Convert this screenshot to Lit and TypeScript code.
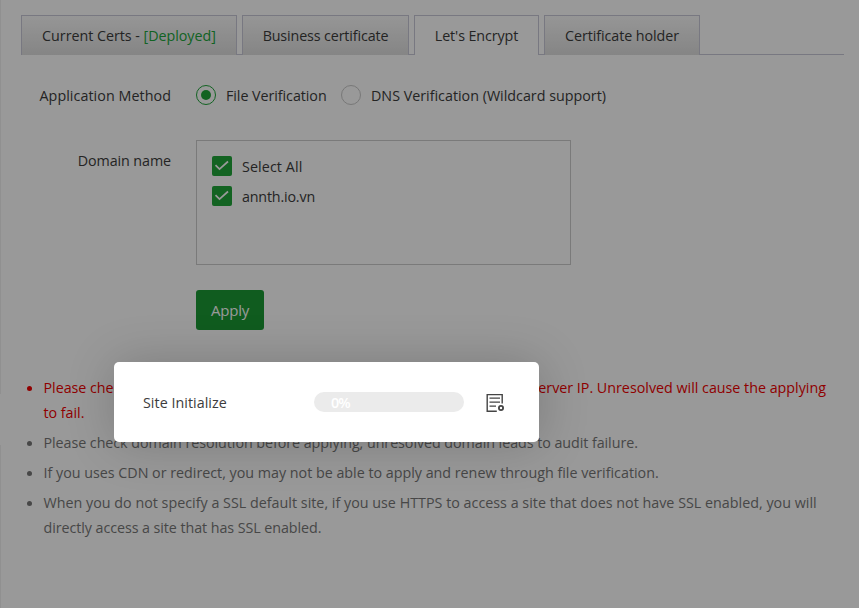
import { LitElement, html, css } from "lit";
import { customElement } from "lit/decorators.js";

@customElement("app-root")
export class AppRoot extends LitElement {
  static styles = css`
    :host { display: block; position: relative; width: 859px; height: 608px; overflow: hidden; background: #fff; color: #3c3c3c;
      font: 14.3px/24px "Open Sans", "Noto Sans", sans-serif; letter-spacing: -0.03px; white-space: nowrap; }
    * { box-sizing: border-box; }
    .panel { height: 608px; padding: 15px 15px 0 21px;
      background: linear-gradient(#f0f0f0 394px, #fff 394px, #fff 445px, #f0f0f0 445px) left / 1px 100% no-repeat; }
    .tabs { display: flex; height: 40px; border-bottom: 1px solid #c8c8d8; }
    .tab { height: 40px; border: 1px solid #c8c8d8; border-bottom: 0; margin-right: 5px; line-height: 40px; text-align: center;
      background: linear-gradient(#fafafa, #dedede); }
    .t1 { width: 216px; }
    .t2 { width: 167px; letter-spacing: -0.13px; }
    .t3 { width: 125px; letter-spacing: -0.1px; }
    .t4 { width: 156px; letter-spacing: -0.07px; }
    .active { background: #fff; }
    .green { color: #20a53a; }
    .row { display: flex; }
    .label { width: 150px; text-align: right; margin-right: 25px; }
    .method { margin-top: 28px; height: 24px; align-items: center; }
    .method .label { letter-spacing: 0.06px; }
    .method .label, .file, .dns { padding-top: 1px; }
    .radio { width: 20px; height: 20px; border: 1px solid #c8c8c8; border-radius: 50%; margin-right: 10px; display: grid; place-items: center; }
    .radio.on { border-color: #20a53a; border-width: 1.5px; }
    .dot { width: 10px; height: 10px; border-radius: 50%; background: #20a53a; }
    .file { width: 115px; letter-spacing: -0.06px; }
    .dns { letter-spacing: 0; }
    .domains { margin-top: 33px; }
    .domains .label { padding-top: 9px; letter-spacing: -0.08px; }
    .box { width: 375px; height: 125px; border: 1px solid #ccc; padding: 10px 15px; }
    .item { display: flex; height: 30px; align-items: center; }
    .item span { padding-top: 1px; }
    .all { letter-spacing: 0.1px; }
    .site { letter-spacing: -0.18px; }
    .check { width: 20px; height: 20px; border-radius: 2px; background: #20a53a; margin-right: 10px; }
    .item .check { padding: 0; }
    .check svg, .logicon { display: block; }
    .apply { width: 68px; height: 40px; margin: 25px 0 0 175px; border-radius: 3px; background: #1c9934; color: #fff; line-height: 40px;
      text-align: center; font-size: 15px; letter-spacing: -0.18px; }
    .notes { list-style: none; margin: 45px 0 0 2px; padding: 0; color: #777; line-height: 25px; }
    .note { display: flex; margin-bottom: 5px; }
    .note::before { content: ""; flex: none; width: 5px; height: 5px; border-radius: 50%; background: currentColor; margin: 11px 11.5px 0 4px; }
    .red { color: #f00000; }
    .lead { display: inline-block; width: 488px; }
    .tail { letter-spacing: -0.01px; }
    .n2 { letter-spacing: -0.055px; }
    .n3 { letter-spacing: -0.01px; }
    .n4 { letter-spacing: 0.01px; }
    .n4b { letter-spacing: -0.07px; }
    .shade { position: absolute; inset: 0; background: rgba(0, 0, 0, 0.4); }
    .dialog { position: absolute; left: 114px; top: 362px; width: 425px; height: 80px; border-radius: 5px; background: #fff;
      box-shadow: 1px 1px 50px rgba(0, 0, 0, 0.2); display: flex; align-items: center; padding-left: 29px; }
    .step { width: 171px; padding-top: 2px; letter-spacing: 0.03px; }
    .bar { width: 150px; height: 20px; border-radius: 10px; background: #ebebeb; color: #fff; line-height: 21px; padding-left: 17px;
      margin-right: 22px; font-weight: 600; letter-spacing: -0.8px; }
    .logicon { margin-top: 2px; }
  `;

  private tick() {
    return html`<span class="check"><svg width="20" height="20" viewBox="0 0 20 20"><path d="M3.5 9.2 7.5 13.2 16 5.5" fill="none" stroke="#fff" stroke-width="1.7"/></svg></span>`;
  }

  render() {
    return html`
      <div class="panel">
        <div class="tabs">
          <div class="tab t1">Current Certs - <span class="green">[Deployed]</span></div>
          <div class="tab t2">Business certificate</div>
          <div class="tab t3 active">Let's Encrypt</div>
          <div class="tab t4">Certificate holder</div>
        </div>
        <div class="row method">
          <span class="label">Application Method</span>
          <span class="radio on"><span class="dot"></span></span><span class="file">File Verification</span>
          <span class="radio"></span><span class="dns">DNS Verification (Wildcard support)</span>
        </div>
        <div class="row domains">
          <span class="label">Domain name</span>
          <div class="box">
            <div class="item">${this.tick()}<span class="all">Select All</span></div>
            <div class="item">${this.tick()}<span class="site">annth.io.vn</span></div>
          </div>
        </div>
        <div class="apply">Apply</div>
        <ul class="notes">
          <li class="note red"><div><span class="lead">Please check whether the domain name is resolved to the</span><span class="tail">server IP. Unresolved will cause the applying</span><br />to fail.</div></li>
          <li class="note"><span class="n2">Please check domain resolution before applying, unresolved domain leads to audit failure.</span></li>
          <li class="note"><span class="n3">If you uses CDN or redirect, you may not be able to apply and renew through file verification.</span></li>
          <li class="note"><div class="n4">When you do not specify a SSL default site, if you use HTTPS to access a site that does not have SSL enabled, you will<br /><span class="n4b">directly access a site that has SSL enabled.</span></div></li>
        </ul>
      </div>
      <div class="shade"></div>
      <div class="dialog">
        <span class="step">Site Initialize</span>
        <div class="bar">0%</div>
        <svg class="logicon" width="20" height="20" viewBox="0 0 20 20" fill="none" stroke="#444" stroke-width="1.4">
          <path d="M10.8 18.3H1.2V1.6h15V10.6M3.5 5.1h10.5M3.5 9.1h10.5M3.5 13.1h6.5"/>
          <circle cx="15" cy="15" r="2.1" stroke-width="1.8"/>
        </svg>
      </div>`;
  }
}
